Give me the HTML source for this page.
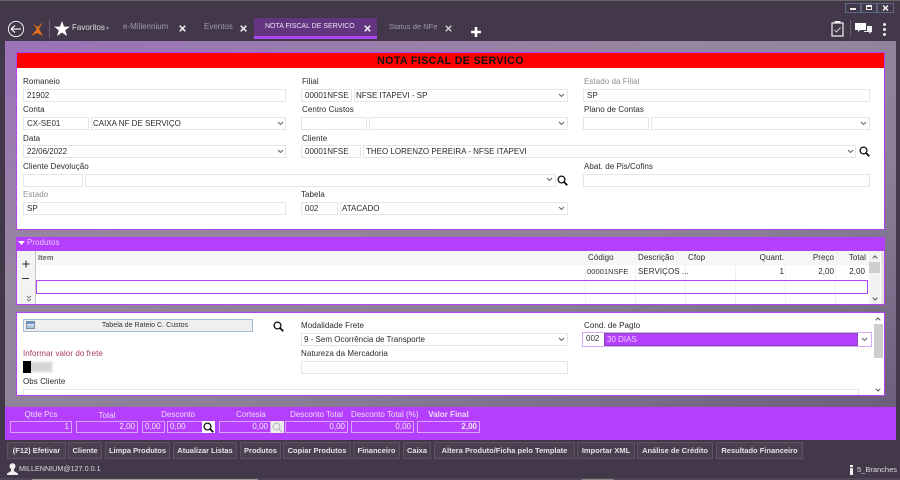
<!DOCTYPE html>
<html><head><meta charset="utf-8"><style>
*{box-sizing:border-box}
html,body{margin:0;padding:0;width:900px;height:480px;overflow:hidden;background:#43384a}
body{position:relative;font-family:"Liberation Sans",sans-serif;font-size:8px;color:#333;filter:blur(.3px)}
div,span.a,svg{position:absolute}
.l{height:10px;line-height:10px;white-space:nowrap;color:#2a2a2a;font-size:8px;letter-spacing:.05px}
.g{color:#8f8f8f}
.i{background:#fff;border:1px solid #e6e6e6;height:13px;line-height:11px;padding-left:3px;color:#2a2a2a;white-space:nowrap;font-size:8px}
.t{height:12px;line-height:12px;white-space:nowrap;font-size:8px}
.w{color:#e0e0e0}
.p{background:#b93fff;border:1px solid #d9a5fa;height:12px;line-height:10px;color:#eee;text-align:right;padding-right:2px;font-size:8px}
.pl{height:10px;line-height:10px;text-align:center;color:#ecdcf8;font-size:8px;white-space:nowrap}
.b{top:442px;height:17px;line-height:15px;background:#4b4050;border:1px solid #5c5262;color:#e2e2e2;font-weight:bold;text-align:center;font-size:7.5px;white-space:nowrap}
.s{width:1px;background:#f0f0f0;top:265px;height:39px}
</style></head><body>
<div style="left:0;top:0;width:900px;height:1px;background:#666"></div>

<!-- main gradient -->
<div style="left:5px;top:41px;width:891px;height:366px;background:linear-gradient(160deg,#9c72ba 0%,#97869f 35%,#8c7f98 65%,#6b5f7c 100%)"></div>

<!-- window buttons -->
<div style="left:845px;top:3px;width:16px;height:10px;border:1px solid #5a6a80"></div>
<div style="left:861px;top:3px;width:16px;height:10px;border:1px solid #5a6a80"></div>
<div style="left:877px;top:3px;width:17px;height:10px;border:1px solid #5a6a80"></div>
<div style="left:850px;top:8px;width:6px;height:2px;background:#eee"></div>
<div style="left:866px;top:5px;width:6px;height:5px;border:1px solid #eee;border-top-width:2px"></div>
<svg style="left:882px;top:5px" width="7" height="6" viewBox="0 0 7 6"><path d="M1 0.5L6 5.5M6 0.5L1 5.5" stroke="#eee" stroke-width="1.5"/></svg>

<!-- top left icons -->
<svg style="left:7px;top:20px" width="18" height="18" viewBox="0 0 18 18"><circle cx="9" cy="9" r="7.6" fill="none" stroke="#eee" stroke-width="1"/><path d="M4 9H14M4 9L8 5.5M4 9L8 12.5" fill="none" stroke="#eee" stroke-width="1.2"/></svg>
<svg style="left:30px;top:21px" width="15" height="16" viewBox="0 0 15 16"><path d="M13 1L8 6L3 3L7 8L1 15L7 12L13 15L9 8Z" fill="#e8701a"/></svg>
<div style="left:49px;top:20px;width:1px;height:18px;background:#6c6272"></div>
<svg style="left:54px;top:21px" width="16" height="16" viewBox="0 0 16 16"><path d="M8 0L10 5.6H16L11.2 9.2L13 15L8 11.5L3 15L4.8 9.2L0 5.6H6Z" fill="#fff"/></svg>
<div class="t w" style="left:72px;top:22px;font-size:8px">Favoritos</div>
<div class="t" style="left:106px;top:23px;color:#999;font-size:6px">▾</div>

<!-- tabs -->
<div class="t" style="left:123px;top:21px;color:#a09aa6;font-size:8px">e-Millennium</div>
<div class="t" style="left:204px;top:21px;color:#a09aa6;font-size:8px">Eventos</div>
<div style="left:254px;top:18px;width:123px;height:21px;background:#63347f;border-bottom:3px solid #b045f2"></div>
<div class="t" style="left:265px;top:21px;color:#ece5f2;font-size:7px">NOTA FISCAL DE SERVICO</div>
<div class="t" style="left:389px;top:21px;color:#a09aa6;font-size:7.6px">Status de NFe</div>
<svg style="left:179px;top:25px" width="7" height="7" viewBox="0 0 7 7"><path d="M.7 .7L6.3 6.3M6.3 .7L.7 6.3" stroke="#eee" stroke-width="1.5"/></svg>
<svg style="left:240px;top:25px" width="7" height="7" viewBox="0 0 7 7"><path d="M.7 .7L6.3 6.3M6.3 .7L.7 6.3" stroke="#eee" stroke-width="1.5"/></svg>
<svg style="left:364px;top:25px" width="7" height="7" viewBox="0 0 7 7"><path d="M.7 .7L6.3 6.3M6.3 .7L.7 6.3" stroke="#eee" stroke-width="1.5"/></svg>
<svg style="left:445px;top:25px" width="7" height="7" viewBox="0 0 7 7"><path d="M.7 .7L6.3 6.3M6.3 .7L.7 6.3" stroke="#ddd" stroke-width="1.3"/></svg>
<svg style="left:471px;top:27px" width="10" height="10" viewBox="0 0 10 10"><path d="M5 0V10M0 5H10" stroke="#fff" stroke-width="2.6"/></svg>

<!-- right icons -->
<svg style="left:831px;top:20px" width="13" height="17" viewBox="0 0 13 17"><path d="M1 3H12V16H1Z" fill="none" stroke="#eee" stroke-width="1.2"/><path d="M4 3V1.5H9V3Z" fill="#eee" stroke="#eee"/><path d="M3.5 10L5.5 12L9.5 7.5" fill="none" stroke="#ccc" stroke-width="1"/></svg>
<div style="left:850px;top:20px;width:1px;height:17px;background:#655b6b"></div>
<svg style="left:855px;top:23px" width="17" height="12" viewBox="0 0 17 12"><path d="M0 0H11V7H5L3 9V7H0Z" fill="#fff"/><path d="M12 3H17V9H15.5V11L13.5 9H9V8H12Z" fill="#eee"/></svg>
<div style="left:883px;top:23px;width:3px;height:3px;background:#eee;border-radius:50%"></div>
<div style="left:883px;top:28px;width:3px;height:3px;background:#eee;border-radius:50%"></div>
<div style="left:883px;top:33px;width:3px;height:3px;background:#eee;border-radius:50%"></div>

<!-- form panel -->
<div style="left:16px;top:52px;width:869px;height:178px;background:#fff;border:1px solid #b344f5"></div>
<div style="left:17px;top:53px;width:867px;height:15px;background:#fe0000;text-align:center;font-weight:bold;font-size:10.6px;line-height:16px;color:#111;letter-spacing:.4px">NOTA FISCAL DE SERVICO</div>

<div class="l" style="left:23px;top:77px">Romaneio</div>
<div class="i" style="left:23px;top:89px;width:263px">21902</div>
<div class="l" style="left:23px;top:105px">Conta</div>
<div class="i" style="left:23px;top:117px;width:66px">CX-SE01</div>
<div class="i" style="left:91px;top:117px;width:195px;padding-left:1px">CAIXA NF DE SERVIÇO</div>
<div class="l" style="left:23px;top:134px">Data</div>
<div class="i" style="left:23px;top:145px;width:263px">22/06/2022</div>
<div class="l" style="left:23px;top:162px">Cliente Devolução</div>
<div class="i" style="left:23px;top:174px;width:60px"></div>
<div class="i" style="left:85px;top:174px;width:471px"></div>
<div class="l g" style="left:23px;top:190px">Estado</div>
<div class="i" style="left:23px;top:202px;width:263px">SP</div>

<div class="l" style="left:302px;top:77px">Filial</div>
<div class="i" style="left:301px;top:89px;width:51px">00001NFSE</div>
<div class="i" style="left:354px;top:89px;width:214px;padding-left:1px">NFSE ITAPEVI - SP</div>
<div class="l" style="left:302px;top:105px">Centro Custos</div>
<div class="i" style="left:301px;top:117px;width:66px"></div>
<div class="i" style="left:369px;top:117px;width:199px"></div>
<div class="l" style="left:302px;top:134px">Cliente</div>
<div class="i" style="left:301px;top:145px;width:60px">00001NFSE</div>
<div class="i" style="left:363px;top:145px;width:493px;padding-left:2px">THEO LORENZO PEREIRA - NFSE ITAPEVI</div>
<div class="l" style="left:301px;top:190px">Tabela</div>
<div class="i" style="left:301px;top:202px;width:37px">002</div>
<div class="i" style="left:340px;top:202px;width:228px;padding-left:1px">ATACADO</div>

<div class="l g" style="left:584px;top:77px">Estado da Filial</div>
<div class="i" style="left:583px;top:89px;width:287px">SP</div>
<div class="l" style="left:584px;top:105px">Plano de Contas</div>
<div class="i" style="left:583px;top:117px;width:66px"></div>
<div class="i" style="left:651px;top:117px;width:219px"></div>
<div class="l" style="left:584px;top:162px">Abat. de Pis/Cofins</div>
<div class="i" style="left:583px;top:174px;width:287px"></div>

<!-- chevrons -->
<svg style="left:277px;top:121px" width="7" height="5" viewBox="0 0 7 5"><path d="M1 1L3.5 3.5L6 1" fill="none" stroke="#666" stroke-width="1.1"/></svg>
<svg style="left:277px;top:149px" width="7" height="5" viewBox="0 0 7 5"><path d="M1 1L3.5 3.5L6 1" fill="none" stroke="#666" stroke-width="1.1"/></svg>
<svg style="left:558px;top:93px" width="7" height="5" viewBox="0 0 7 5"><path d="M1 1L3.5 3.5L6 1" fill="none" stroke="#666" stroke-width="1.1"/></svg>
<svg style="left:558px;top:121px" width="7" height="5" viewBox="0 0 7 5"><path d="M1 1L3.5 3.5L6 1" fill="none" stroke="#666" stroke-width="1.1"/></svg>
<svg style="left:558px;top:206px" width="7" height="5" viewBox="0 0 7 5"><path d="M1 1L3.5 3.5L6 1" fill="none" stroke="#666" stroke-width="1.1"/></svg>
<svg style="left:546px;top:177px" width="7" height="5" viewBox="0 0 7 5"><path d="M1 1L3.5 3.5L6 1" fill="none" stroke="#666" stroke-width="1.1"/></svg>
<svg style="left:847px;top:149px" width="7" height="5" viewBox="0 0 7 5"><path d="M1 1L3.5 3.5L6 1" fill="none" stroke="#666" stroke-width="1.1"/></svg>
<svg style="left:860px;top:121px" width="7" height="5" viewBox="0 0 7 5"><path d="M1 1L3.5 3.5L6 1" fill="none" stroke="#666" stroke-width="1.1"/></svg>
<svg style="left:557px;top:175px" width="11" height="11" viewBox="0 0 11 11"><circle cx="4.5" cy="4.5" r="3.4" fill="none" stroke="#111" stroke-width="1.3"/><path d="M7 7L10.3 10.3" stroke="#111" stroke-width="1.8"/></svg>
<svg style="left:859px;top:146px" width="11" height="11" viewBox="0 0 11 11"><circle cx="4.5" cy="4.5" r="3.4" fill="none" stroke="#111" stroke-width="1.3"/><path d="M7 7L10.3 10.3" stroke="#111" stroke-width="1.8"/></svg>

<!-- produtos -->
<div style="left:16px;top:237px;width:869px;height:68px;background:#fff;border:1px solid #b344f5"></div>
<div style="left:16px;top:237px;width:869px;height:14px;background:#b53fff"></div>
<svg style="left:18px;top:241px" width="7" height="5" viewBox="0 0 7 5"><path d="M0 0H7L3.5 4Z" fill="#fff"/></svg>
<div class="l" style="left:27px;top:238px;color:#e6c8fb">Produtos</div>
<div style="left:17px;top:251px;width:19px;height:53px;background:#f3f3f3;border-right:1px solid #c4c4c4"></div>
<div style="left:36px;top:251px;width:834px;height:14px;background:#f6f6f6"></div>
<svg style="left:22px;top:260px" width="8" height="8" viewBox="0 0 8 8"><path d="M4 .5V7.5M.5 4H7.5" stroke="#222" stroke-width="1"/></svg>
<div style="left:22px;top:278px;width:7px;height:1px;background:#333"></div>
<svg style="left:26px;top:295px" width="6" height="7" viewBox="0 0 6 7"><path d="M1 1L3 3L5 1M1 4L3 6L5 4" fill="none" stroke="#777" stroke-width=".9"/></svg>
<div class="l" style="left:38px;top:253px;font-weight:bold;color:#666;font-size:7.5px">Item</div>
<div class="l" style="left:588px;top:253px">Código</div>
<div class="l" style="left:638px;top:253px">Descrição</div>
<div class="l" style="left:688px;top:253px">Cfop</div>
<div class="l" style="left:744px;top:253px;width:40px;text-align:right">Quant.</div>
<div class="l" style="left:794px;top:253px;width:40px;text-align:right">Preço</div>
<div class="l" style="left:826px;top:253px;width:40px;text-align:right">Total</div>
<div class="s" style="left:585px"></div><div class="s" style="left:635px"></div><div class="s" style="left:685px"></div><div class="s" style="left:735px"></div><div class="s" style="left:785px"></div><div class="s" style="left:835px"></div>
<div class="l" style="left:587px;top:267px;font-size:7.5px">00001NSFE</div>
<div class="l" style="left:638px;top:267px">SERVIÇOS ...</div>
<div class="l" style="left:744px;top:267px;width:40px;text-align:right">1</div>
<div class="l" style="left:794px;top:267px;width:40px;text-align:right">2,00</div>
<div class="l" style="left:825px;top:267px;width:40px;text-align:right">2,00</div>
<div style="left:36px;top:280px;width:832px;height:14px;border:1px solid #b344f5;background:transparent"></div>
<div style="left:869px;top:251px;width:11px;height:53px;background:#f2f2f2"></div>
<div style="left:869px;top:262px;width:11px;height:11px;background:#cfcfcf"></div>
<div style="left:881px;top:251px;width:3px;height:53px;background:#e4e4e4"></div>
<svg style="left:872px;top:255px" width="6" height="4" viewBox="0 0 6 4"><path d="M.7 3.3L3 1L5.3 3.3" fill="none" stroke="#555"/></svg>
<svg style="left:872px;top:297px" width="6" height="4" viewBox="0 0 6 4"><path d="M.7 .7L3 3L5.3 .7" fill="none" stroke="#555"/></svg>

<!-- lower panel -->
<div style="left:16px;top:312px;width:869px;height:84px;background:#fff;border:1px solid #b344f5"></div>
<div style="left:23px;top:319px;width:230px;height:13px;background:#efefef;border:1px solid #a7bccd;text-align:center;line-height:11px;font-size:7.1px;color:#333;padding-left:14px">Tabela de Rateio C. Custos</div>
<div style="left:26px;top:321px;width:9px;height:8px;background:linear-gradient(#6a8ed0 0 35%,#dfe8f2 35% 55%,#a8c4d8 55%);border:1px solid #7a90a8"></div>
<svg style="left:273px;top:321px" width="11" height="11" viewBox="0 0 11 11"><circle cx="4.5" cy="4.5" r="3.4" fill="none" stroke="#111" stroke-width="1.3"/><path d="M7 7L10.3 10.3" stroke="#111" stroke-width="1.8"/></svg>
<div class="l" style="left:23px;top:349px;color:#a83a5c">Informar valor do frete</div>
<div style="left:23px;top:361px;width:30px;height:12px;background:#e8e8e8"></div>
<div style="left:31px;top:363px;width:20px;height:8px;background:#d6d6d6"></div>
<div style="left:23px;top:361px;width:8px;height:12px;background:#000"></div>
<div class="l" style="left:23px;top:377px">Obs Cliente</div>
<div style="left:23px;top:389px;width:836px;height:6px;background:#fff;border:1px solid #e6e6e6;border-bottom:0"></div>
<div class="l" style="left:301px;top:321px">Modalidade Frete</div>
<div class="i" style="left:301px;top:333px;width:267px;padding-left:2px">9 - Sem Ocorrência de Transporte</div>
<svg style="left:558px;top:337px" width="7" height="5" viewBox="0 0 7 5"><path d="M1 1L3.5 3.5L6 1" fill="none" stroke="#666" stroke-width="1.1"/></svg>
<div class="l" style="left:301px;top:349px">Natureza da Mercadoria</div>
<div class="i" style="left:301px;top:361px;width:267px"></div>
<div class="l" style="left:584px;top:321px">Cond. de Pagto</div>
<div style="left:582px;top:332px;width:290px;height:15px;border:1px solid #d8a8f8;background:#fff"></div>
<div class="t" style="left:586px;top:333px">002</div>
<div style="left:604px;top:333px;width:254px;height:13px;background:#b53fff;border:1px solid #8a4ab8;line-height:11px;padding-left:2px;color:#ecd2ff;font-size:8px">30 DIAS</div>
<svg style="left:861px;top:337px" width="7" height="5" viewBox="0 0 7 5"><path d="M1 1L3.5 3.5L6 1" fill="none" stroke="#666" stroke-width="1.1"/></svg>
<div style="left:874px;top:324px;width:9px;height:34px;background:#cdcdcd"></div>
<svg style="left:875px;top:317px" width="6" height="4" viewBox="0 0 6 4"><path d="M.7 3.3L3 1L5.3 3.3" fill="none" stroke="#555"/></svg>
<svg style="left:875px;top:388px" width="6" height="4" viewBox="0 0 6 4"><path d="M.7 .7L3 3L5.3 .7" fill="none" stroke="#555"/></svg>

<!-- totals bar -->
<div style="left:5px;top:407px;width:891px;height:33px;background:#b53fff"></div>
<div class="pl" style="left:10px;top:410px;width:62px">Qtde Pcs</div>
<div class="pl" style="left:76px;top:411px;width:62px">Total</div>
<div class="pl" style="left:142px;top:410px;width:72px">Desconto</div>
<div class="pl" style="left:219px;top:410px;width:64px">Cortesia</div>
<div class="pl" style="left:285px;top:410px;width:63px">Desconto Total</div>
<div class="pl" style="left:351px;top:410px;width:63px">Desconto Total (%)</div>
<div class="pl" style="left:417px;top:410px;width:63px;font-weight:bold">Valor Final</div>
<div class="p" style="left:10px;top:421px;width:62px">1</div>
<div class="p" style="left:76px;top:421px;width:62px">2,00</div>
<div class="p" style="left:142px;top:421px;width:23px;text-align:left;padding-left:2px">0,00</div>
<div class="p" style="left:167px;top:421px;width:36px;text-align:left;padding-left:2px">0,00</div>
<div style="left:202px;top:421px;width:13px;height:12px;background:#fff"></div>
<svg style="left:203px;top:422px" width="11" height="11" viewBox="0 0 11 11"><circle cx="4.5" cy="4.5" r="3.4" fill="none" stroke="#111" stroke-width="1.3"/><path d="M7 7L10.3 10.3" stroke="#111" stroke-width="1.8"/></svg>
<div class="p" style="left:219px;top:421px;width:52px">0,00</div>
<div style="left:271px;top:421px;width:13px;height:12px;background:#eee"></div>
<svg style="left:272px;top:422px" width="11" height="11" viewBox="0 0 11 11"><circle cx="4.5" cy="4.5" r="3.4" fill="none" stroke="#bbb" stroke-width="1.1"/><path d="M7 7L10.3 10.3" stroke="#bbb" stroke-width="1.5"/></svg>
<div class="p" style="left:285px;top:421px;width:63px">0,00</div>
<div class="p" style="left:351px;top:421px;width:63px">0,00</div>
<div class="p" style="left:417px;top:421px;width:63px;font-weight:bold">2,00</div>

<!-- buttons -->
<div class="b" style="left:7px;width:59px">(F12) Efetivar</div>
<div class="b" style="left:68px;width:34px">Cliente</div>
<div class="b" style="left:105px;width:65px">Limpa Produtos</div>
<div class="b" style="left:173px;width:64px">Atualizar Listas</div>
<div class="b" style="left:240px;width:41px">Produtos</div>
<div class="b" style="left:283px;width:68px">Copiar Produtos</div>
<div class="b" style="left:353px;width:47px">Financeiro</div>
<div class="b" style="left:403px;width:28px">Caixa</div>
<div class="b" style="left:434px;width:141px">Altera Produto/Ficha pelo Template</div>
<div class="b" style="left:577px;width:58px">Importar XML</div>
<div class="b" style="left:637px;width:76px">Análise de Crédito</div>
<div class="b" style="left:716px;width:87px">Resultado Financeiro</div>

<!-- status -->
<svg style="left:7px;top:463px" width="11" height="12" viewBox="0 0 11 12"><circle cx="5.5" cy="3.2" r="3" fill="#eee"/><path d="M0 12V10.5L4 8V6H7V8L11 10.5V12Z" fill="#eee"/></svg>
<div class="t" style="left:19px;top:463px;color:#ddd;font-size:7.2px">MILLENNIUM@127.0.0.1</div>
<svg style="left:849px;top:465px" width="5" height="10" viewBox="0 0 5 10"><rect x="1" y="0" width="3" height="2.2" fill="#eee"/><rect x="1" y="3.2" width="3" height="6.8" fill="#eee"/></svg>
<div class="t" style="left:857px;top:464px;color:#ddd;font-size:7.5px">5_Branches</div>
<div style="left:0;top:478px;width:900px;height:2px;background:#4e4654"></div>
<div style="left:32px;top:479px;width:226px;height:1px;background:#999"></div>
<div style="left:582px;top:479px;width:32px;height:1px;background:#888"></div>
</body></html>
